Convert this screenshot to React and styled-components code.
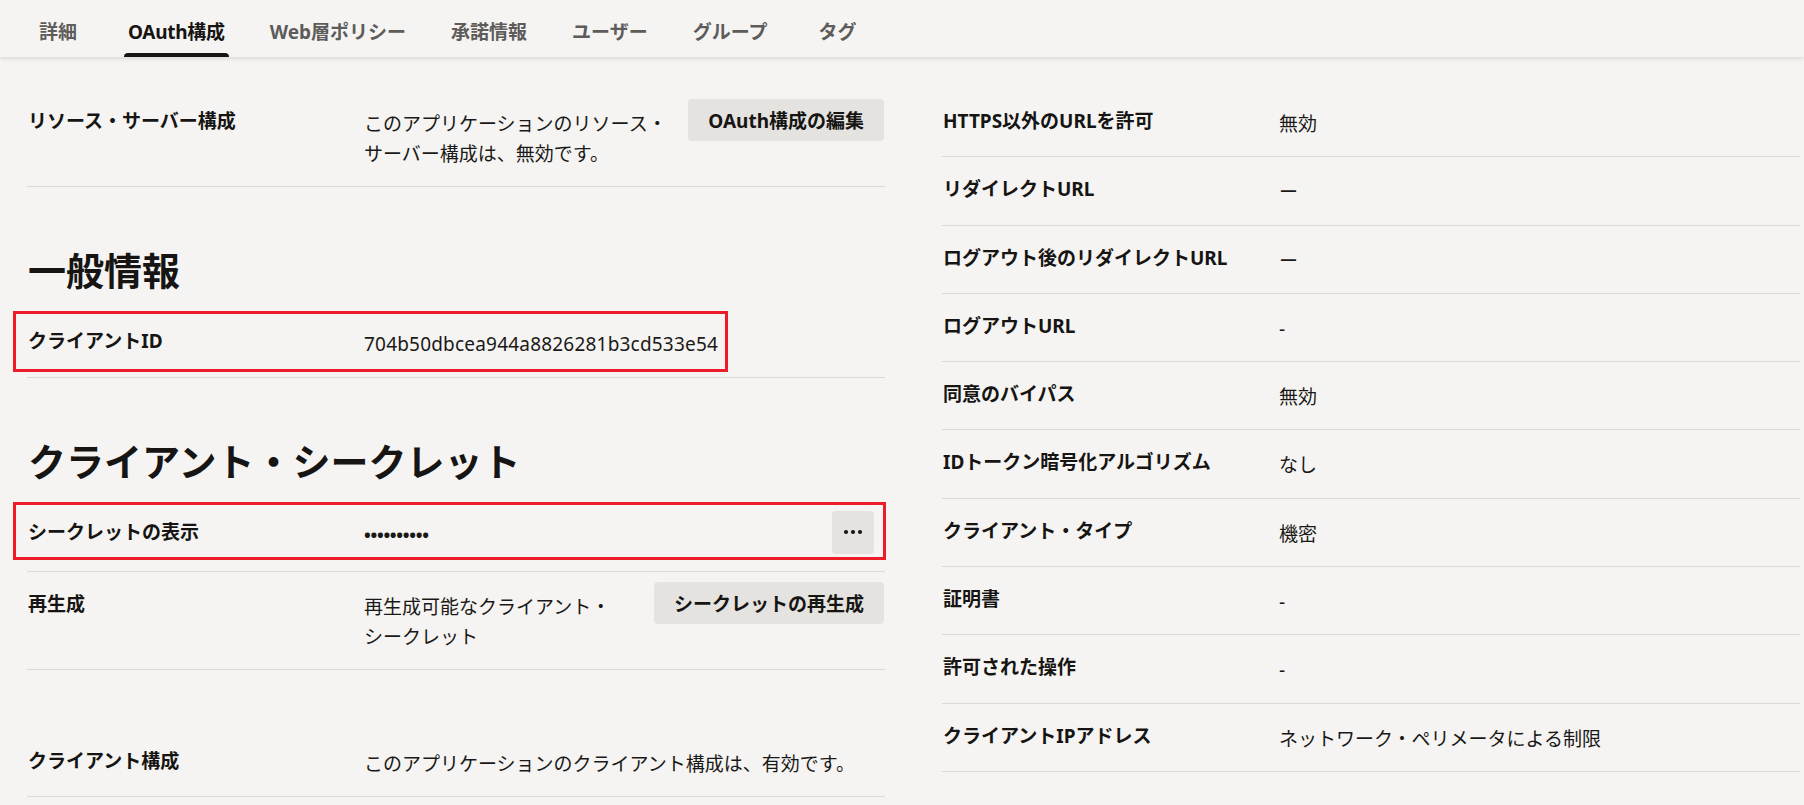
import React from "react";
import styled, { createGlobalStyle } from "styled-components";

const Global = createGlobalStyle`
  html, body { margin: 0; padding: 0; background: #f5f4f2; }
  * { box-sizing: border-box; }
`;

const FONT = `"Noto Sans", "Noto Sans CJK JP", sans-serif`;

const Page = styled.div`
  min-height: 100vh;
  background: #f5f4f2;
  font-family: ${FONT};
  color: #161513;
  overflow: hidden;
`;

const TabBar = styled.nav`
  position: relative;
  z-index: 1;
  display: flex;
  gap: 37px;
  height: 57px;
  padding-left: 29px;
  background: #f5f4f2;
  box-shadow: 0 2px 4px rgba(0, 0, 0, 0.1);
`;

const Tab = styled.div`
  position: relative;
  display: flex;
  align-items: center;
  justify-content: center;
  min-width: 58px;
  padding: 5px 4px 0;
  font-size: 19px;
  font-weight: 700;
  letter-spacing: ${(p) => (p.$active ? "-0.3px" : "0")};
  color: ${(p) => (p.$active ? "#161513" : "#5d5c5a")};
  &::after {
    content: "";
    display: ${(p) => (p.$active ? "block" : "none")};
    position: absolute;
    left: 0;
    right: 0;
    bottom: 0;
    height: 4px;
    border-radius: 4px 4px 0 0;
    background: #161513;
  }
`;

const Content = styled.main`
  display: flex;
  gap: 57px;
  padding: 32px 4px 0 27px;
`;

const Column = styled.section`
  width: 858px;
  flex-shrink: 0;
  display: flex;
  flex-direction: column;
`;

const Row = styled.div`
  position: relative;
  display: flex;
  align-items: flex-start;
  padding: 17px 0 17.3px 1px;
  border-bottom: 1px solid #dcdad7;
  margin-top: ${(p) => (p.$spaced ? "59px" : "0")};
`;

const Label = styled.div`
  width: 336px;
  flex-shrink: 0;
  font-size: 19px;
  line-height: 30px;
  font-weight: 700;
`;

const Value = styled.div`
  flex: 1;
  max-width: ${(p) => (p.$maxWidth ? `${p.$maxWidth}px` : "none")};
  padding-top: 3px;
  font-size: 19px;
  line-height: 30px;
  font-weight: 400;
  color: #1a1917;
`;

const IdValue = styled(Value)`
  letter-spacing: 0.2px;
`;

const Masked = styled(Value)`
  font-size: 18px;
  letter-spacing: -0.3px;
  font-weight: 700;
`;

const ActionButton = styled.button`
  flex-shrink: 0;
  margin: -7px 1px 0 auto;
  height: 42px;
  padding: 0 20px;
  border: none;
  border-radius: 4px;
  background: #e4e3e0;
  font-family: ${FONT};
  font-size: 19px;
  font-weight: 700;
  color: #161513;
  white-space: nowrap;
`;

const IconButton = styled.button`
  flex-shrink: 0;
  display: flex;
  align-items: center;
  justify-content: center;
  margin: -6px 11px 0 auto;
  width: 42px;
  height: 43px;
  padding: 0;
  border: none;
  border-radius: 4px;
  background: #e4e3e0;
  color: #161513;
`;

const Heading = styled.h2`
  margin: 61px 0 17px 1px;
  font-size: 38px;
  line-height: 44px;
  font-weight: 700;
  color: #161513;
`;

const Highlight = styled.div`
  position: absolute;
  top: 2px;
  left: -14px;
  width: ${(p) => p.$w}px;
  height: ${(p) => p.$h}px;
  border: 3px solid #ec1c28;
  pointer-events: none;
`;

const Dots = () => (
  <svg width="20" height="6" viewBox="0 0 20 6" aria-hidden="true">
    <circle cx="3" cy="3" r="2.1" fill="currentColor" />
    <circle cx="10" cy="3" r="2.1" fill="currentColor" />
    <circle cx="17" cy="3" r="2.1" fill="currentColor" />
  </svg>
);

const tabs = ["詳細", "OAuth構成", "Web層ポリシー", "承諾情報", "ユーザー", "グループ", "タグ"];

const rightRows = [
  ["HTTPS以外のURLを許可", "無効"],
  ["リダイレクトURL", "ー"],
  ["ログアウト後のリダイレクトURL", "ー"],
  ["ログアウトURL", "-"],
  ["同意のバイパス", "無効"],
  ["IDトークン暗号化アルゴリズム", "なし"],
  ["クライアント・タイプ", "機密"],
  ["証明書", "-"],
  ["許可された操作", "-"],
  ["クライアントIPアドレス", "ネットワーク・ペリメータによる制限"],
];

export default function App() {
  return (
    <Page>
      <Global />
      <TabBar>
        {tabs.map((t) => (
          <Tab key={t} $active={t === "OAuth構成"}>
            {t}
          </Tab>
        ))}
      </TabBar>
      <Content>
        <Column>
          <Row>
            <Label>リソース・サーバー構成</Label>
            <Value $maxWidth={312}>このアプリケーションのリソース・サーバー構成は、無効です。</Value>
            <ActionButton>OAuth構成の編集</ActionButton>
          </Row>

          <Heading>一般情報</Heading>
          <Row>
            <Highlight $w={715} $h={61} />
            <Label>クライアントID</Label>
            <IdValue>704b50dbcea944a8826281b3cd533e54</IdValue>
          </Row>

          <Heading>クライアント・シークレット</Heading>
          <Row>
            <Highlight $w={873} $h={58} />
            <Label>シークレットの表示</Label>
            <Masked>••••••••••</Masked>
            <IconButton aria-label="その他">
              <Dots />
            </IconButton>
          </Row>
          <Row>
            <Label>再生成</Label>
            <Value $maxWidth={260}>再生成可能なクライアント・シークレット</Value>
            <ActionButton>シークレットの再生成</ActionButton>
          </Row>

          <Row $spaced>
            <Label>クライアント構成</Label>
            <Value>このアプリケーションのクライアント構成は、有効です。</Value>
          </Row>
        </Column>

        <Column>
          {rightRows.map(([l, v]) => (
            <Row key={l}>
              <Label>{l}</Label>
              <Value>{v}</Value>
            </Row>
          ))}
        </Column>
      </Content>
    </Page>
  );
}
